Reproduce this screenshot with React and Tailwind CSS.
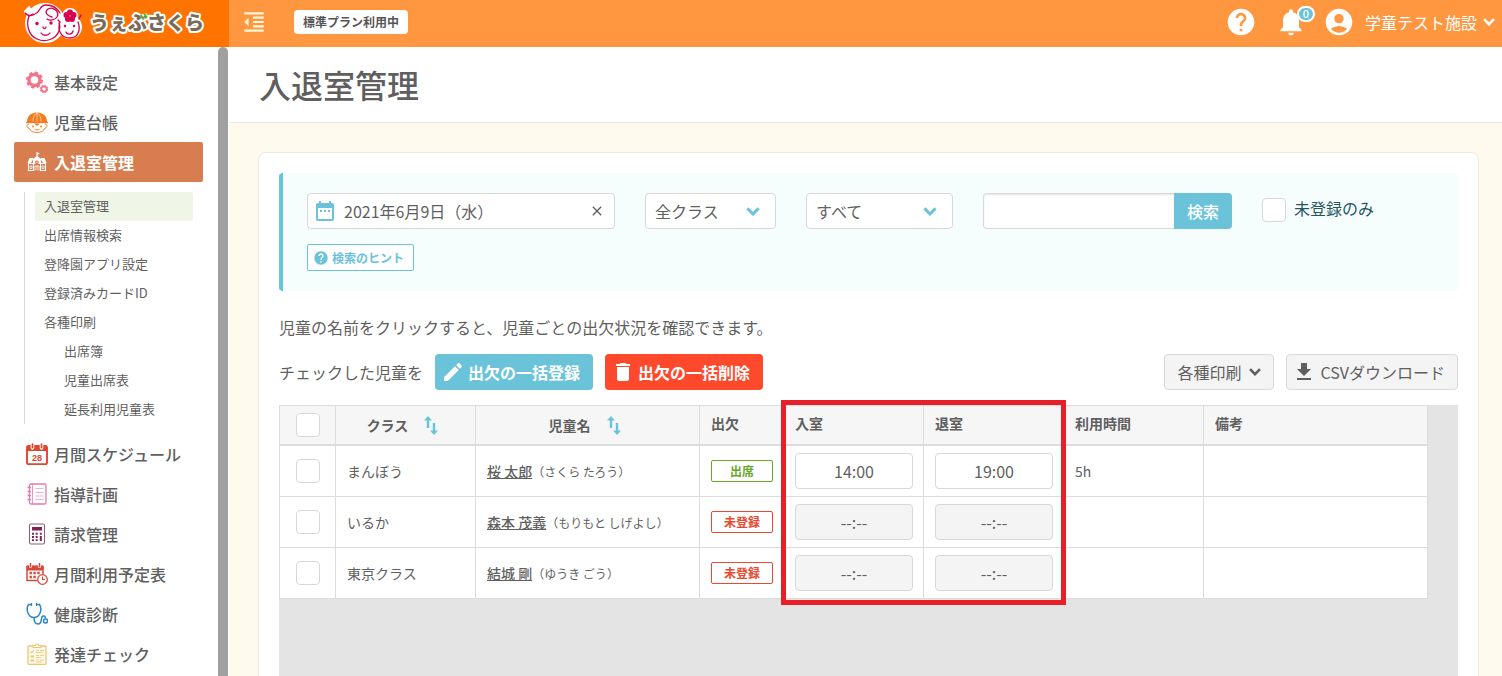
import React from 'react';
import {
  MdAccountCircle,
  MdClose,
  MdDateRange,
  MdDelete,
  MdEdit,
  MdFileDownload,
  MdFormatIndentDecrease,
  MdHelp,
  MdNotifications,
} from 'react-icons/md';

const Chevron = ({ className }) => (
  <svg viewBox="0 0 12 8" className={className} fill="none" stroke="currentColor" strokeWidth="2.6">
    <path d="M1 1.2 6 6.2 11 1.2" />
  </svg>
);

const SortIcon = () => (
  <svg viewBox="0 0 14 19" className="h-[19px] w-3.5" fill="#6bc3da">
    <path d="M4 0 8 4.500H5.200V12H2.800V4.500H0z" />
    <path d="M10 19 6 14.500H8.800V7h2.400v7.500H14z" />
  </svg>
);

const Logo = () => (
  <svg viewBox="0 0 184 44" className="h-11 w-46" role="img" aria-label="うぇぶさくら">
    <g fill="#fff" stroke="#fff" strokeWidth="3">
      <circle cx="21" cy="21" r="18.500" />
      <circle cx="46" cy="25" r="10.500" />
      <path d="M1 10 10 15 5 6z" />
      <circle cx="46" cy="14" r="6.500" />
    </g>
    <g fill="none" stroke="#d8004f" strokeWidth="1.300" strokeLinecap="round">
      <path d="M5 14C2 22 4 33 13 37c9 4 19 0 22-8 1-3 1-6 0-8" />
      <path d="M1 11c3 3 7 3 10 1C17 10 15 3 22 3c6 0 11 3 14 8" />
      <path d="M28 15c-5-1-8-5-4-8 5-3 12 3 9 8-2 3-7 4-10 2M5 14l4-2" />
      <path d="M36 20c-3 8 1 16 10 16 8 0 11-8 8-16M55 17l2-4M36 20l-2-2" />
      <path d="M17 31c2 3 7 3 9 0M19 25c0 2 3 2 3 0M42 30c1 3 6 3 7-1" />
    </g>
    <g fill="#d8004f">
      <circle cx="13" cy="21.500" r="1.700" />
      <circle cx="27" cy="21" r="1.700" />
      <circle cx="41" cy="24" r="1.200" />
      <circle cx="50" cy="24" r="1.200" />
      <circle cx="46" cy="10.500" r="3" />
      <circle cx="49.500" cy="13" r="3" />
      <circle cx="48" cy="17" r="3" />
      <circle cx="44" cy="17" r="3" />
      <circle cx="42.500" cy="13" r="3" />
    </g>
    <text
      x="66"
      y="28"
      fontFamily="'Noto Sans CJK JP', sans-serif"
      fontSize="19"
      fontWeight="900"
      fill="#7a6a5a"
      stroke="#fff"
      strokeWidth="4"
      strokeLinejoin="round"
      paintOrder="stroke"
    >
      うぇぶさくら
    </text>
    <path d="M117 13.500l2 3M120.500 12l2 3" stroke="#5cb531" strokeWidth="2" strokeLinecap="round" />
  </svg>
);

const iconClass = 'size-[22px] shrink-0';

const GearsIcon = () => (
  <svg viewBox="0 0 22 22" className={iconClass} fill="none" stroke="#f5738a">
    <circle cx="8.500" cy="9" r="5.500" strokeWidth="3.400" />
    <circle cx="8.500" cy="9" r="7.400" strokeWidth="2.200" strokeDasharray="3.300 2.510" />
    <circle cx="18" cy="18" r="2.600" strokeWidth="1.800" />
    <circle cx="18" cy="18" r="3.500" strokeWidth="1.200" strokeDasharray="1.600 1.150" />
  </svg>
);

const ChildIcon = () => (
  <svg viewBox="0 0 22 22" className={iconClass}>
    <path d="M3 13c-3 0-2.500 4 0 4 1 3 4 4.500 8 4.500s7-1.500 8-4.500c2.500 0 3-4 0-4" fill="#fff" stroke="#f5832a" />
    <path d="M1 11C1 5 5 1.500 11 1.500S21 5 21 11z" fill="#f47b20" />
    <path d="M7 10.500C7 6 8.500 3 11 2c2.500 1 4 4 4 8.500M11 1v9.500" stroke="#fde0c5" strokeWidth=".7" fill="none" />
    <path d="M0 11.500h22" stroke="#f47b20" strokeWidth="1.200" />
    <path d="M8 12.500h6L11 15z" fill="#f47b20" />
    <circle cx="7" cy="15.500" r=".9" fill="#f47b20" />
    <circle cx="15" cy="15.500" r=".9" fill="#f47b20" />
    <path d="M8.500 18c1.500 1.300 3.500 1.300 5 0" fill="none" stroke="#f47b20" />
  </svg>
);

const SchoolIcon = () => (
  <svg viewBox="0 0 22 22" className={iconClass}>
    <path d="M10.500 6V1l3.500 1.500-2.500 1.200V6" fill="#fff" />
    <path d="M11 4.500 5.500 9.500h11zM3.500 7h4L5 12H1.500zM18.500 7h-4l2.500 5h3.500z" fill="#fff" />
    <path d="M7 9h8v4H7z" fill="#fff" />
    <path d="M2.500 12.500h5v7h-5zM14.500 12.500h5v7h-5zM7.500 10v9.500M14.500 10v9.500" fill="none" stroke="#fff" strokeWidth="1.100" />
    <circle cx="11" cy="11.500" r="1.900" fill="#d87d4f" />
    <path d="M11 10.500v1.200h1" stroke="#fff" strokeWidth=".6" fill="none" />
    <path d="M9 19.500V15h4v4.500M11 15v4.500M4 15h2v2.500H4zM16 15h2v2.500h-2z" fill="none" stroke="#fff" strokeWidth=".8" />
  </svg>
);

const ScheduleIcon = () => (
  <svg viewBox="0 0 22 22" className={iconClass}>
    <rect x="1" y="3" width="20" height="18.200" rx="1.500" fill="#fff" stroke="#e0452f" strokeWidth="1.900" />
    <path d="M1 3h20v5H1z" fill="#e0452f" />
    <path d="M6.500 1v4M15.500 1v4" stroke="#fff" strokeWidth="3.600" strokeLinecap="round" />
    <path d="M6.500 1v3.500M15.500 1v3.500" stroke="#e0452f" strokeWidth="1.700" strokeLinecap="round" />
    <text x="11" y="17.500" textAnchor="middle" fontFamily="'Liberation Sans', sans-serif" fontWeight="700" fontSize="9" fill="#e0452f">
      28
    </text>
  </svg>
);

const NotebookIcon = () => (
  <svg viewBox="0 0 22 22" className={iconClass} fill="none" stroke="#e878b0">
    <rect x="3.500" y="1" width="16.500" height="20" rx="1.500" strokeWidth="1.300" />
    <path d="M6.500 1v20" strokeWidth=".8" />
    <path d="M1.500 4.500H5M1.500 8.500H5M1.500 12.500H5M1.500 16.500H5" strokeWidth="1.300" />
    <path d="M9.500 5.500h8M9.500 9.500h8M9.500 13h8M9.500 16.500h8" strokeWidth=".6" />
  </svg>
);

const CalculatorIcon = () => (
  <svg viewBox="0 0 22 22" className={iconClass}>
    <rect x="3.500" y="1" width="15" height="20" rx="1.500" fill="#fff" stroke="#8c6377" strokeWidth="1.100" />
    <path d="M6 4h10v3.500H6z" fill="#7d2350" />
    <path d="M7 9.800v9M10.700 9.800v9" stroke="#7d2350" strokeWidth="2" strokeDasharray="1.900 1.300" />
    <path d="M14.800 9.800v1.900M14.800 13v5.100" stroke="#7d2350" strokeWidth="2" />
  </svg>
);

const PlanIcon = () => (
  <svg viewBox="0 0 22 22" className={iconClass} fill="none" stroke="#d8483a">
    <path d="M11 17.500H1V3.500h16V11" strokeWidth="1.500" />
    <path d="M1 3h16v4H1z" fill="#d8483a" />
    <path d="M4.500 0v4.500M13.500 0v4.500" stroke="#fff" strokeWidth="3" />
    <path d="M4.500 0v4M13.500 0v4" strokeWidth="1.500" />
    <path d="M3.500 10h11M3.500 14h8" strokeWidth="2.400" strokeDasharray="2.400 1.500" />
    <circle cx="16.500" cy="16.500" r="4.800" fill="#fff" strokeWidth="1.300" />
    <path d="M16.500 13.500v3h2.500" strokeWidth="1.200" />
  </svg>
);

const StethoscopeIcon = () => (
  <svg viewBox="0 0 22 22" className={iconClass} fill="none" stroke="#2a86c8" strokeWidth="1.500">
    <path d="M5 1.500H2.500C-.5 6 2 14.500 8 14.500S16.500 6 13.500 1.500H11" />
    <path d="M5.500 0v3M10.500 0v3" strokeWidth="1.300" />
    <path d="M8 14.500c0 4 .5 6.500 4 6.500 5 0 2-7 5-8 2-.5 2.500 1.500 2.500 2.500" />
    <circle cx="19.500" cy="18" r="2" />
  </svg>
);

const ClipboardIcon = () => (
  <svg viewBox="0 0 22 22" className={iconClass} fill="none" stroke="#f0c56d">
    <rect x="2" y="3" width="18" height="18.300" rx="1" strokeWidth="1.300" fill="#fffaf0" />
    <path d="M7 4.500V2.500h2.500a1.500 1.500 0 0 1 3 0H15v2z" fill="#fff" strokeWidth="1.100" />
    <path d="m4.500 8.500 1.200 1.200L8 7" strokeWidth="1.100" />
    <path d="M4.500 13.500H8M4.500 17.500H8" strokeWidth="2" />
    <path d="M10 7.500h3M14 7.500h4M10 9.500h7M10 12.500h3M14 12.500h4M10 14.500h5M10 17h3M14 17h4M10 19h6" strokeWidth=".9" />
  </svg>
);

const mainMenu = [
  { label: '基本設定', icon: GearsIcon },
  { label: '児童台帳', icon: ChildIcon },
  {
    label: '入退室管理',
    icon: SchoolIcon,
    active: true,
    children: [
      { label: '入退室管理', active: true },
      { label: '出席情報検索' },
      { label: '登降園アプリ設定' },
      { label: '登録済みカードID' },
      { label: '各種印刷' },
      { label: '出席簿', nested: true },
      { label: '児童出席表', nested: true },
      { label: '延長利用児童表', nested: true },
    ],
  },
  { label: '月間スケジュール', icon: ScheduleIcon },
  { label: '指導計画', icon: NotebookIcon },
  { label: '請求管理', icon: CalculatorIcon },
  { label: '月間利用予定表', icon: PlanIcon },
  { label: '健康診断', icon: StethoscopeIcon },
  { label: '発達チェック', icon: ClipboardIcon },
];

const rows = [
  { className: 'まんぼう', name: '桜 太郎', kana: 'さくら たろう', present: true, in: '14:00', out: '19:00', hours: '5h' },
  { className: 'いるか', name: '森本 茂義', kana: 'もりもと しげよし', present: false, in: '--:--', out: '--:--', hours: '' },
  { className: '東京クラス', name: '結城 剛', kana: 'ゆうき ごう', present: false, in: '--:--', out: '--:--', hours: '' },
];

const Checkbox = (props) => (
  <input
    type="checkbox"
    className="block size-6 shrink-0 appearance-none rounded border border-[#d8d8d8] bg-white checked:bg-[#6bc3da]"
    {...props}
  />
);

const Header = () => (
  <header className="flex h-[47px] shrink-0 bg-[#ff9640] text-white">
    <a href="#" className="flex w-[229px] shrink-0 items-center bg-[#ff7300] pl-6">
      <Logo />
    </a>
    <div className="flex flex-1 items-center pr-[7px] pb-1 pl-3">
      <button type="button" aria-label="メニューを閉じる">
        <MdFormatIndentDecrease className="size-[26px] text-[#fff6dc]" />
      </button>
      <span className="ml-[27px] flex h-6 items-center rounded bg-white px-[9px] text-xs font-bold text-[#555]">
        標準プラン利用中
      </span>
      <div className="ml-auto flex items-center">
        <button type="button" aria-label="ヘルプ">
          <MdHelp className="size-8" />
        </button>
        <button type="button" aria-label="お知らせ" className="relative ml-[18px]">
          <MdNotifications className="size-8" />
          <span className="absolute top-0 -right-2 flex h-4 items-center rounded-full border-2 border-white bg-[#6bc3da] px-1 text-[11px] font-medium">
            0
          </span>
        </button>
        <button type="button" className="ml-4 flex items-center">
          <MdAccountCircle className="size-8" />
          <span className="ml-2.5">学童テスト施設</span>
          <Chevron className="ml-1.5 h-2 w-3" />
        </button>
      </div>
    </div>
  </header>
);

const Sidebar = () => (
  <aside className="flex w-[229px] shrink-0 bg-white pr-px">
    <nav className="flex-1 pt-[15px] pr-[15px] pl-3.5">
      {mainMenu.map((item) => (
        <div key={item.label}>
          <a
            href="#"
            className={`flex h-10 items-center gap-1.5 rounded-xs pl-3 ${
              item.active ? 'bg-[#d87d4f] font-bold text-white' : 'font-medium'
            }`}
          >
            <item.icon />
            {item.label}
          </a>
          {item.children && (
            <div className="my-2.5 mr-2.5 ml-2.5 border-l border-[#d8d8d8] pl-2.5">
              {item.children.map((child) => (
                <a
                  key={child.label}
                  href="#"
                  className={`flex h-[29px] items-center rounded-xs pb-0.5 text-[13px] ${
                    child.nested ? 'pl-[29px]' : 'pl-[9px]'
                  } ${child.active ? 'bg-[#eff6e7]' : ''}`}
                >
                  {child.label}
                </a>
              ))}
            </div>
          )}
        </div>
      ))}
    </nav>
    <div className="w-2.5 rounded-t-full bg-[#a0a0a0]" />
  </aside>
);

const Select = ({ label, options, className }) => (
  <div className={`relative ${className}`}>
    <select
      aria-label={label}
      className="h-9 w-full appearance-none rounded border border-[#d8d8d8] bg-white pr-8 pl-[9px]"
    >
      {options.map((option) => (
        <option key={option}>{option}</option>
      ))}
    </select>
    <Chevron className="pointer-events-none absolute top-3.5 right-4 h-[9px] w-3.5 text-[#6bc3da]" />
  </div>
);

const Filters = () => (
  <section className="rounded-sm border-l-4 border-[#6bc3da] bg-[#f6fdfd] px-6 py-5">
    <div className="flex flex-wrap gap-[30px]">
      <div className="flex h-9 w-[308px] items-center rounded border border-[#d8d8d8] bg-white pr-[9px] pl-[5px]">
        <MdDateRange className="size-6 shrink-0 text-[#6bc3da]" />
        <input aria-label="日付" defaultValue="2021年6月9日（水）" className="min-w-0 flex-1 pl-[7px]" />
        <button type="button" aria-label="クリア">
          <MdClose className="size-4" />
        </button>
      </div>
      <Select label="クラス" options={['全クラス']} className="w-[131px]" />
      <Select label="出欠" options={['すべて']} className="w-[147px]" />
      <div className="flex">
        <input
          aria-label="検索キーワード"
          className="h-9 w-[191px] rounded-l border border-r-0 border-[#d8d8d8] bg-white px-2 shadow-[inset_0_1px_2px_rgba(0,0,0,0.1)]"
        />
        <button type="button" className="h-9 w-[58px] rounded-r bg-[#6bc3da] font-medium text-white">
          検索
        </button>
      </div>
      <label className="flex items-center gap-2 pb-1.5 text-[#285560]">
        <span className="pt-1">
          <Checkbox />
        </span>
        未登録のみ
      </label>
    </div>
    <button
      type="button"
      className="mt-[15px] flex h-[27px] items-center gap-[3px] rounded-xs border border-[#6bc3da] bg-white px-[5px] pr-[9px] text-xs font-bold text-[#6bc3da]"
    >
      <MdHelp className="size-4" />
      検索のヒント
    </button>
  </section>
);

const Actions = () => (
  <div className="mt-[15px] flex items-center gap-3">
    <span>チェックした児童を</span>
    <button type="button" className="flex h-9 items-center gap-[3px] rounded bg-[#6bc3da] pr-[13px] pl-1.5 font-bold text-white">
      <MdEdit className="size-6" />
      出欠の一括登録
    </button>
    <button type="button" className="flex h-9 items-center gap-[3px] rounded bg-[#ff492c] pr-[13px] pl-1.5 font-bold text-white">
      <MdDelete className="size-6" />
      出欠の一括削除
    </button>
    <button type="button" className="ml-auto flex h-9 items-center gap-2 rounded border border-[#d8d8d8] bg-[#f4f4f4] px-3">
      各種印刷
      <Chevron className="h-2 w-3" />
    </button>
    <button type="button" className="flex h-9 items-center gap-1 rounded border border-[#d8d8d8] bg-[#f4f4f4] pr-3 pl-[5px]">
      <MdFileDownload className="size-6" />
      CSVダウンロード
    </button>
  </div>
);

const headClass = 'h-10 border-r border-b-2 border-[#dcdcdc] bg-[#f6f6f6] px-[11px] text-left';
const plainHeadClass = `${headClass} pb-1`;
const cellClass = 'h-[51px] border-r border-b border-[#dcdcdc] pr-2.5 pl-[11px]';

const TimeInput = ({ label, value }) => (
  <input
    aria-label={label}
    defaultValue={value}
    className={`block h-9 w-full rounded border border-[#d8d8d8] text-center text-base ${
      value === '--:--' ? 'bg-[#f4f4f4]' : 'bg-white'
    }`}
  />
);

const AttendanceTable = () => (
  <div className="relative mt-[15px] flex-1 bg-[#e4e4e4]">
    <table className="w-[1149px] table-fixed border-separate border-spacing-0 border-t border-l border-[#dcdcdc] bg-white text-sm">
      <colgroup>
        <col className="w-14" />
        <col className="w-[140px]" />
        <col className="w-56" />
        <col className="w-[84px]" />
        <col className="w-[140px]" />
        <col className="w-[140px]" />
        <col className="w-[140px]" />
        <col className="w-56" />
      </colgroup>
      <thead>
        <tr>
          <th className={headClass}>
            <div className="flex justify-center">
              <Checkbox aria-label="すべて選択" />
            </div>
          </th>
          <th className={headClass}>
            <div className="flex items-center justify-center gap-4 pr-1.5">
              クラス
              <SortIcon />
            </div>
          </th>
          <th className={headClass}>
            <div className="flex items-center justify-center gap-4 pr-1.5">
              児童名
              <SortIcon />
            </div>
          </th>
          <th className={plainHeadClass}>出欠</th>
          <th className={plainHeadClass}>入室</th>
          <th className={plainHeadClass}>退室</th>
          <th className={plainHeadClass}>利用時間</th>
          <th className={plainHeadClass}>備考</th>
        </tr>
      </thead>
      <tbody>
        {rows.map((row) => (
          <tr key={row.name}>
            <td className={cellClass}>
              <div className="flex justify-center">
                <Checkbox aria-label={row.name} />
              </div>
            </td>
            <td className={cellClass}>{row.className}</td>
            <td className={cellClass}>
              <a href="#" className="font-medium underline">
                {row.name}
              </a>
              <span className="text-xs">（{row.kana}）</span>
            </td>
            <td className={cellClass}>
              <span
                className={`flex h-[22px] w-[62px] items-center justify-center rounded-xs border text-xs font-bold ${
                  row.present ? 'border-[#6ba526] text-[#6ba526]' : 'border-[#e8492f] text-[#e8492f]'
                }`}
              >
                {row.present ? '出席' : '未登録'}
              </span>
            </td>
            <td className={cellClass}>
              <TimeInput label={`${row.name} 入室`} value={row.in} />
            </td>
            <td className={cellClass}>
              <TimeInput label={`${row.name} 退室`} value={row.out} />
            </td>
            <td className={cellClass}>{row.hours}</td>
            <td className={cellClass}></td>
          </tr>
        ))}
      </tbody>
    </table>
    {/* highlight over the 入室 / 退室 columns */}
    <div className="pointer-events-none absolute -top-[5px] left-[502px] h-[205px] w-[285px] border-5 border-[#e71f28]" />
  </div>
);

const App = () => {
  return (
    <div className="flex min-h-screen flex-col font-['Noto_Sans_CJK_JP',sans-serif] text-base text-[#5f5f5f]">
      <Header />
      <div className="flex flex-1">
        <Sidebar />
        <main className="flex min-w-0 flex-1 flex-col bg-[#fffaed]">
          <div className="flex h-19 items-center border-b border-[#e8e8e8] bg-white pb-0.5 pl-[30px]">
            <h1 className="text-[32px] font-medium">入退室管理</h1>
          </div>
          <div className="mt-[29px] mr-[23px] ml-[29px] flex flex-1 flex-col rounded-t-lg border border-b-0 border-[#ececdf] bg-white px-5 pt-5">
            <Filters />
            <p className="mt-6">児童の名前をクリックすると、児童ごとの出欠状況を確認できます。</p>
            <Actions />
            <AttendanceTable />
          </div>
        </main>
      </div>
    </div>
  );
};

export default App;
